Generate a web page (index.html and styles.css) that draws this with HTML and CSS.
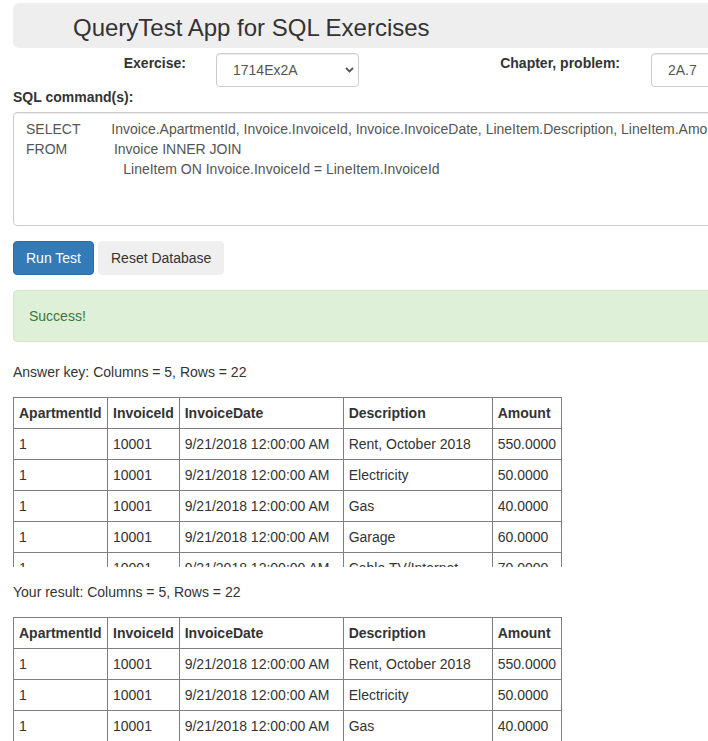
FILE: index.html
```html
<!DOCTYPE html>
<html lang="en">
<head>
<meta charset="utf-8">
<title>QueryTest App for SQL Exercises</title>
<link rel="stylesheet" href="styles.css">
</head>
<body>
<div class="page">
  <div class="jumbo"><h1>QueryTest App for SQL Exercises</h1></div>

  <div class="form-row">
    <label class="lbl lbl-ex" for="ex">Exercise:</label>
    <div class="select-wrap sw-ex">
      <select id="ex" class="sel"><option>1714Ex2A</option></select>
      <svg class="chev" width="9" height="6" viewBox="0 0 9 6"><path d="M1 1 L4.5 4.5 L8 1" fill="none" stroke="#555" stroke-width="1.8"/></svg>
    </div>
    <label class="lbl lbl-ch" for="ch">Chapter, problem:</label>
    <div class="select-wrap sw-ch">
      <select id="ch" class="sel"><option>2A.7</option></select>
    </div>
  </div>

  <label class="sql-label" for="sql">SQL command(s):</label>
  <textarea id="sql" class="sql" wrap="off" spellcheck="false">SELECT        Invoice.ApartmentId, Invoice.InvoiceId, Invoice.InvoiceDate, LineItem.Description, LineItem.Amount
FROM            Invoice INNER JOIN
                         LineItem ON Invoice.InvoiceId = LineItem.InvoiceId</textarea>

  <div class="buttons">
    <button class="btn btn-primary" type="button">Run Test</button>
    <button class="btn btn-reset" type="button">Reset Database</button>
  </div>

  <div class="alert">Success!</div>

  <div class="count">Answer key: Columns = 5, Rows = 22</div>
  <div class="scroll">
    <table class="grid">
      <thead>
        <tr><th class="c1">ApartmentId</th><th class="c2">InvoiceId</th><th class="c3">InvoiceDate</th><th class="c4">Description</th><th class="c5">Amount</th></tr>
      </thead>
      <tbody>
        <tr><td>1</td><td>10001</td><td>9/21/2018 12:00:00 AM</td><td>Rent, October 2018</td><td>550.0000</td></tr>
        <tr><td>1</td><td>10001</td><td>9/21/2018 12:00:00 AM</td><td>Electricity</td><td>50.0000</td></tr>
        <tr><td>1</td><td>10001</td><td>9/21/2018 12:00:00 AM</td><td>Gas</td><td>40.0000</td></tr>
        <tr><td>1</td><td>10001</td><td>9/21/2018 12:00:00 AM</td><td>Garage</td><td>60.0000</td></tr>
        <tr><td>1</td><td>10001</td><td>9/21/2018 12:00:00 AM</td><td>Cable TV/Internet</td><td>70.0000</td></tr>
      </tbody>
    </table>
  </div>

  <div class="count">Your result: Columns = 5, Rows = 22</div>
  <table class="grid">
    <thead>
      <tr><th class="c1">ApartmentId</th><th class="c2">InvoiceId</th><th class="c3">InvoiceDate</th><th class="c4">Description</th><th class="c5">Amount</th></tr>
    </thead>
    <tbody>
      <tr><td>1</td><td>10001</td><td>9/21/2018 12:00:00 AM</td><td>Rent, October 2018</td><td>550.0000</td></tr>
      <tr><td>1</td><td>10001</td><td>9/21/2018 12:00:00 AM</td><td>Electricity</td><td>50.0000</td></tr>
      <tr><td>1</td><td>10001</td><td>9/21/2018 12:00:00 AM</td><td>Gas</td><td>40.0000</td></tr>
      <tr><td>1</td><td>10001</td><td>9/21/2018 12:00:00 AM</td><td>Garage</td><td>60.0000</td></tr>
      <tr><td>1</td><td>10001</td><td>9/21/2018 12:00:00 AM</td><td>Cable TV/Internet</td><td>70.0000</td></tr>
    </tbody>
  </table>
</div>
</body>
</html>
```

FILE: styles.css
```css
html, body {
  overflow: hidden;
}
body {
  margin: 0;
  font-family: "Liberation Sans", Arial, sans-serif;
  font-size: 14px;
  line-height: 20px;
  color: #333;
  background: #fff;
}
.page {
  width: 1000px;
  padding: 3px 13px 0;
}
.jumbo {
  background: #eee;
  border-radius: 6px;
  padding: 12px 0 7px 60px;
  margin-bottom: 5px;
}
.jumbo h1 {
  margin: 0;
  font-size: 24px;
  line-height: 26px;
  font-weight: normal;
  color: #333;
}
.form-row {
  display: flex;
  align-items: flex-start;
  height: 34px;
}
.lbl {
  font-weight: bold;
  text-align: right;
  line-height: 20px;
}
.lbl-ex {
  width: 173px;
  margin-right: 30px;
}
.lbl-ch {
  width: 261px;
  margin-right: 31px;
}
.select-wrap {
  position: relative;
}
.sw-ex {
  width: 143px;
}
.sw-ch {
  width: 150px;
}
.sel {
  appearance: none;
  -webkit-appearance: none;
  display: block;
  width: 100%;
  height: 34px;
  box-sizing: border-box;
  padding: 0 16px;
  border: 1px solid #ccc;
  border-radius: 4px;
  background: #fff;
  color: #555;
  font-family: inherit;
  font-size: 14px;
  box-shadow: inset 0 1px 1px rgba(0,0,0,0.075);
}
.chev {
  position: absolute;
  right: 5px;
  top: 14px;
  pointer-events: none;
}
.sql-label {
  display: block;
  font-weight: bold;
  margin-bottom: 5px;
}
.sql {
  display: block;
  width: 100%;
  height: 114px;
  box-sizing: border-box;
  margin: 0 0 15px;
  padding: 6px 12px;
  border: 1px solid #ccc;
  border-radius: 4px;
  box-shadow: inset 0 1px 1px rgba(0,0,0,0.075);
  font-family: "Liberation Sans", Arial, sans-serif;
  font-size: 14px;
  line-height: 20px;
  color: #555;
  white-space: pre;
  overflow: hidden;
  resize: none;
}
.buttons {
  display: flex;
  gap: 4px;
  margin-bottom: 15px;
}
.btn {
  font-family: inherit;
  font-size: 14px;
  line-height: 20px;
  height: 34px;
  padding: 6px 12px;
  border: 1px solid transparent;
  border-radius: 4px;
  box-sizing: border-box;
}
.btn-primary {
  background: #337ab7;
  border-color: #2e6da4;
  color: #fff;
}
.btn-reset {
  background: #efefef;
  border-color: #efefef;
  color: #333;
}
.alert {
  padding: 15px;
  border: 1px solid #d6e9c6;
  background: #dff0d8;
  color: #3c763d;
  border-radius: 4px;
  margin-bottom: 20px;
}
.count {
  margin-bottom: 15px;
}
.scroll {
  height: 170px;
  overflow: hidden;
  margin-bottom: 15px;
}
.grid {
  border-collapse: collapse;
}
.grid th,
.grid td {
  border: 1px solid #808080;
  padding: 5px;
  text-align: left;
  line-height: 20px;
  white-space: nowrap;
  color: #333;
}
.grid th {
  font-weight: bold;
}
.c1 { width: 83px; }
.c2 { width: 59px; }
.c3 { width: 153px; }
.c4 { width: 138px; }
.c5 { width: 57px; }
```
